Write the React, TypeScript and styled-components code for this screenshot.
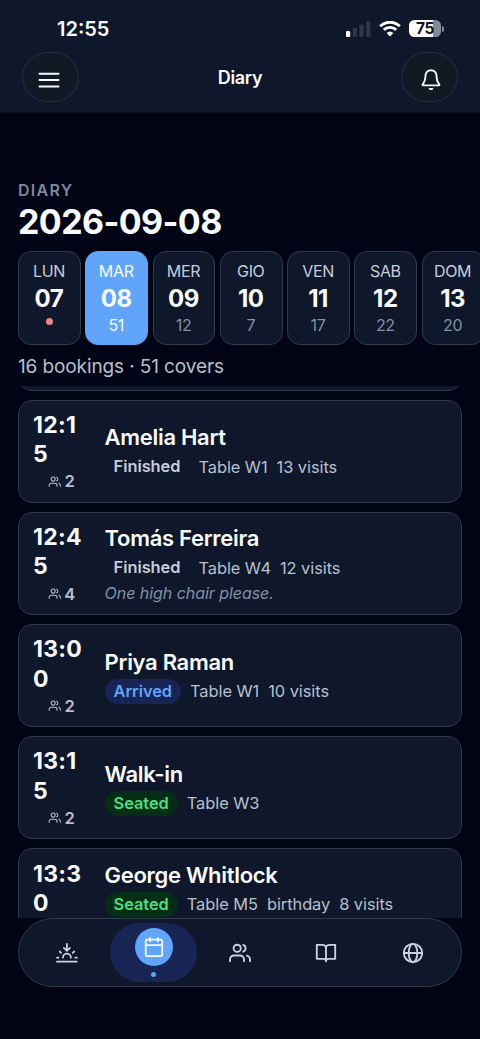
import React from "react";
import styled, { createGlobalStyle } from "styled-components";

const GlobalStyle = createGlobalStyle`
  * { box-sizing: border-box; }
  body {
    margin: 0;
    background: #010414;
    font-family: Inter, "Liberation Sans", sans-serif;
    color: #f8fafc;
    overflow: hidden;
  }
`;

const Screen = styled.div`
  width: 480px;
  height: 1039px;
  display: flex;
  flex-direction: column;
  background: #010414;
  overflow: hidden;
`;

const Header = styled.header`
  height: 113px;
  flex: none;
  background: #0f172a;
  border-bottom: 1px solid #0b1020;
`;

const StatusBar = styled.div`
  height: 52px;
  display: flex;
  justify-content: space-between;
  align-items: center;
  padding: 5px 36px 0 57px;
`;

const Clock = styled.span`
  font-size: 20px;
  font-weight: 600;
  letter-spacing: 0;
`;

const StatusIcons = styled.div`
  display: flex;
  align-items: center;
  gap: 8px;
`;

const TitleBar = styled.div`
  height: 51px;
  display: flex;
  align-items: center;
  justify-content: space-between;
  padding: 0 22px;
`;

const RoundButton = styled.button<{ $inset: string }>`
  width: 57px;
  height: 50px;
  margin-bottom: 1px;
  padding: ${(p) => p.$inset};
  border: 1px solid #242f4b;
  border-radius: 25px;
  background: #111a24;
  color: #f8fafc;
  display: flex;
  align-items: center;
  justify-content: center;
`;

const Title = styled.h1`
  margin: 0;
  font-size: 18px;
  font-weight: 600;
  letter-spacing: -0.3px;
`;

const Intro = styled.section`
  flex: none;
  padding: 67px 0 0 18px;
  height: 273px;
`;

const Eyebrow = styled.div`
  font-size: 16px;
  line-height: 21px;
  font-weight: 600;
  letter-spacing: 1.3px;
  color: #7e899e;
`;

const Heading = styled.h2`
  margin: 0 0 8px;
  font-size: 34px;
  line-height: 42px;
  font-weight: 700;
  letter-spacing: -0.6px;
`;

const Days = styled.div`
  display: flex;
  gap: 4.4px;
  overflow: hidden;
`;

const Day = styled.button<{ $active?: boolean }>`
  flex: none;
  width: 62.9px;
  height: 94.4px;
  padding: 8px 1px 0 0;
  border: 1px solid ${(p) => (p.$active ? "#60a5fa" : "#303a4c")};
  border-radius: 13px;
  background: ${(p) => (p.$active ? "#60a5fa" : "#0f172a")};
  font-family: inherit;
  display: flex;
  flex-direction: column;
  align-items: center;
`;

const DayName = styled.span<{ $active?: boolean }>`
  font-size: 16px;
  line-height: 22px;
  letter-spacing: -0.35px;
  color: ${(p) => (p.$active ? "#f8fafc" : "#c5cddb")};
`;

const DayNumber = styled.span`
  padding-top: 1px;
  font-size: 24px;
  line-height: 31px;
  font-weight: 700;
  letter-spacing: -0.5px;
  color: #f8fafc;
`;

const DayCovers = styled.span<{ $active?: boolean }>`
  font-size: 16px;
  line-height: 22px;
  letter-spacing: -0.3px;
  color: ${(p) => (p.$active ? "#f8fafc" : "#8490a5")};
`;

const ClosedDot = styled.span`
  width: 7px;
  height: 7px;
  margin: 4px 0 0 1px;
  border-radius: 50%;
  background: #e58787;
`;

const Summary = styled.p`
  margin: 8.2px 0 0;
  font-size: 19px;
  line-height: 25px;
  letter-spacing: -0.11px;
  color: #b7c0cf;
`;

const List = styled.main`
  height: 532px;
  flex: none;
  overflow: hidden;
  padding: 0 18px;
  display: flex;
  flex-direction: column;
  gap: 9.2px;
`;

const PassedCard = styled.div`
  height: 4.5px;
  flex: none;
  display: flex;
  align-items: flex-end;
  overflow: hidden;
  &::after {
    content: "";
    flex: 1;
    height: 60px;
    border: 1px solid #303a4c;
    border-radius: 14px;
    background: #0f172a;
  }
`;

const Card = styled.article`
  flex: none;
  height: 103px;
  border: 1px solid #303a4c;
  border-radius: 14px;
  background: #0f172a;
  padding: 0 14px;
  display: flex;
  align-items: center;
  gap: 14.6px;
`;

const TimeColumn = styled.div`
  width: 57px;
  flex: none;
  display: flex;
  flex-direction: column;
  margin-top: 2px;
`;

const Time = styled.div`
  width: 52px;
  font-size: 23px;
  line-height: 29.3px;
  font-weight: 700;
  letter-spacing: 0.3px;
  word-break: break-all;
`;

const Party = styled.div`
  display: flex;
  align-items: center;
  justify-content: center;
  gap: 3px;
  height: 24px;
  font-size: 16.5px;
  font-weight: 600;
  color: #b7c0cf;
`;

const Details = styled.div`
  display: flex;
  flex-direction: column;
  padding-top: 1.4px;
`;

const Guest = styled.div`
  font-size: 22px;
  line-height: 30px;
  font-weight: 600;
  letter-spacing: -0.3px;
  white-space: nowrap;
`;

const Meta = styled.div`
  display: flex;
  align-items: center;
  gap: 9px;
  height: 29px;
  font-size: 16.4px;
  letter-spacing: -0.05px;
  color: #b7c0cf;
  white-space: nowrap;
`;

type Status = "Finished" | "Arrived" | "Seated";

const pillColors: Record<Status, { bg: string; fg: string }> = {
  Finished: { bg: "transparent", fg: "#c5cddb" },
  Arrived: { bg: "#172454", fg: "#60a5fa" },
  Seated: { bg: "#052e16", fg: "#4ade80" },
};

const Pill = styled.span<{ $status: Status }>`
  height: 25px;
  line-height: 25px;
  padding: 0 9px;
  border-radius: 13px;
  font-weight: 600;
  letter-spacing: -0.05px;
  background: ${(p) => pillColors[p.$status].bg};
  color: ${(p) => pillColors[p.$status].fg};
`;

const Note = styled.div`
  height: 23px;
  font-size: 16px;
  line-height: 23px;
  font-style: italic;
  letter-spacing: -0.05px;
  color: #8490a5;
`;

const TabBar = styled.nav`
  flex: none;
  height: 69.4px;
  margin: 0 18px;
  padding: 0 5px;
  border: 1px solid #303a4c;
  border-radius: 35px;
  background: #0f172a;
  display: flex;
  align-items: center;
  color: #c8d1e6;
`;

const Tab = styled.button<{ $active?: boolean }>`
  flex: 1;
  height: 59px;
  padding: ${(p) => (p.$active ? "5px 0 0" : "0")};
  border: 0;
  border-radius: 30px;
  background: ${(p) => (p.$active ? "#172454" : "transparent")};
  color: inherit;
  display: flex;
  flex-direction: column;
  align-items: center;
  justify-content: ${(p) => (p.$active ? "flex-start" : "center")};
`;

const ActiveCircle = styled.span`
  width: 38px;
  height: 38px;
  border-radius: 50%;
  background: #60a5fa;
  color: #f8fafc;
  display: flex;
  align-items: center;
  justify-content: center;
`;

const ActiveDot = styled.span`
  width: 5px;
  height: 5px;
  margin-top: 6px;
  border-radius: 50%;
  background: #60a5fa;
`;

function Icon({ size = 24, box = "0 0 24 24", width = 1.85, children }: { size?: number; box?: string; width?: number; children: React.ReactNode }) {
  return (
    <svg width={size} height={size} viewBox={box} fill="none" stroke="currentColor" strokeWidth={width} strokeLinecap="round" strokeLinejoin="round">
      {children}
    </svg>
  );
}

const UsersPaths = () => (
  <>
    <path d="M2 20.2v-1.7a4 4 0 0 1 4-4h6a4 4 0 0 1 4 4v1.7" />
    <circle cx="9.2" cy="7.3" r="3.6" />
    <path d="M22 20.2v-1.7a4 4 0 0 0-3-3.8M15.2 3.9a3.6 3.6 0 0 1 0 6.8" />
  </>
);

const Signal = () => (
  <svg width="25" height="16" viewBox="0 0 25 16" fill="#2f3748">
    <rect x="0" y="10" width="4.2" height="6" rx="1.2" fill="#fff" />
    <rect x="6.8" y="7" width="4.2" height="9" rx="1.2" />
    <rect x="13.4" y="3.5" width="4.2" height="12.5" rx="1.2" />
    <rect x="20.2" y="0.3" width="4.2" height="15.7" rx="1.2" />
  </svg>
);

const Wifi = () => (
  <svg width="22" height="16" viewBox="0 0.6 22 16" fill="none" stroke="#fff" strokeWidth="2.9">
    <path d="M1.2 5.8a14 14 0 0 1 19.6 0" />
    <path d="M4.8 9.5a8.9 8.9 0 0 1 12.4 0" />
    <path d="M7.6 12.6a5 5 0 0 1 6.8 0L11 16z" fill="#fff" stroke="none" />
  </svg>
);

const Battery = styled.div`
  display: flex;
  align-items: center;
  gap: 1px;
  &::after {
    content: "";
    width: 2px;
    height: 6px;
    border-radius: 0 2px 2px 0;
    background: #858995;
  }
`;

const BatteryBody = styled.div`
  width: 32px;
  height: 17px;
  border-radius: 5.5px;
  background: linear-gradient(90deg, #fff 75%, #858995 75%);
  color: #0f172a;
  font-size: 15.5px;
  line-height: 17px;
  font-weight: 700;
  letter-spacing: -0.4px;
  text-align: center;
`;

const days = [
  { name: "LUN", number: "07" },
  { name: "MAR", number: "08", covers: 51, active: true },
  { name: "MER", number: "09", covers: 12 },
  { name: "GIO", number: "10", covers: 7 },
  { name: "VEN", number: "11", covers: 17 },
  { name: "SAB", number: "12", covers: 22 },
  { name: "DOM", number: "13", covers: 20 },
];

type Booking = { time: string; party?: number; guest: string; status: Status; meta: string[]; note?: string };

const bookings: Booking[] = [
  { time: "12:15", party: 2, guest: "Amelia Hart", status: "Finished", meta: ["Table W1", "13 visits"] },
  { time: "12:45", party: 4, guest: "Tomás Ferreira", status: "Finished", meta: ["Table W4", "12 visits"], note: "One high chair please." },
  { time: "13:00", party: 2, guest: "Priya Raman", status: "Arrived", meta: ["Table W1", "10 visits"] },
  { time: "13:15", party: 2, guest: "Walk-in", status: "Seated", meta: ["Table W3"] },
  { time: "13:30", guest: "George Whitlock", status: "Seated", meta: ["Table M5", "birthday", "8 visits"], note: "" },
];

export default function App() {
  return (
    <Screen>
      <GlobalStyle />
      <Header>
        <StatusBar>
          <Clock>12:55</Clock>
          <StatusIcons>
            <Signal />
            <Wifi />
            <Battery><BatteryBody>75</BatteryBody></Battery>
          </StatusIcons>
        </StatusBar>
        <TitleBar>
          <RoundButton $inset="5px 3px 0 0" aria-label="Menu">
            <Icon width={2}><path d="M2.5 5.7h19M2.5 12.1h19M2.5 18.5h19" /></Icon>
          </RoundButton>
          <Title>Diary</Title>
          <RoundButton $inset="5px 0 0 3px" aria-label="Notifications">
            <Icon>
              <path d="M12 2.2c-3.1 0-5.3 2.3-5.5 5.4-.2 3.9-.5 5.4-1.6 7-.6.9-1.4 1.5-1.4 2.1 0 .4.3.6.8.6h15.4c.5 0 .8-.2.8-.6 0-.6-.8-1.2-1.4-2.1-1.1-1.6-1.4-3.1-1.6-7-.2-3.1-2.4-5.4-5.5-5.4z" />
              <path d="M10.3 20.7c.7 1 2.7 1 3.4 0z" fill="currentColor" strokeWidth={1.4} />
            </Icon>
          </RoundButton>
        </TitleBar>
      </Header>

      <Intro>
        <Eyebrow>DIARY</Eyebrow>
        <Heading>2026-09-08</Heading>
        <Days>
          {days.map((d) => (
            <Day key={d.number} $active={d.active}>
              <DayName $active={d.active}>{d.name}</DayName>
              <DayNumber>{d.number}</DayNumber>
              {d.covers ? <DayCovers $active={d.active}>{d.covers}</DayCovers> : <ClosedDot />}
            </Day>
          ))}
        </Days>
        <Summary>16 bookings · 51 covers</Summary>
      </Intro>

      <List>
        <PassedCard />
        {bookings.map((b) => (
          <Card key={b.time}>
            <TimeColumn>
              <Time>{b.time}</Time>
              <Party>
                {b.party && <Icon size={13.5}><UsersPaths /></Icon>}
                {b.party}
              </Party>
            </TimeColumn>
            <Details>
              <Guest>{b.guest}</Guest>
              <Meta>
                <Pill $status={b.status}>{b.status}</Pill>
                {b.meta.map((m) => <span key={m}>{m}</span>)}
              </Meta>
              {b.note !== undefined && <Note>{b.note}</Note>}
            </Details>
          </Card>
        ))}
      </List>

      <TabBar>
        <Tab aria-label="Today">
          <Icon size={22} box="0 -1 22 22" width={1.8}>
            <path d="M10.9 1v6.5M7.9 4.9l3 3 3-3M6.9 14.7a4 4 0 0 1 8 0M1 14.7h1.4M19.4 14.7h1.4M3.7 8.5l1.3 1.3M18.1 8.5l-1.3 1.3M1 18.7h19.8" />
          </Icon>
        </Tab>
        <Tab $active aria-label="Diary">
          <ActiveCircle>
            <Icon size={22} width={1.9}><rect x="3" y="4" width="18" height="18" rx="1.5" /><path d="M7.7 2v3.8M16.3 2v3.8M3 10h18" /></Icon>
          </ActiveCircle>
          <ActiveDot />
        </Tab>
        <Tab aria-label="Guests"><Icon><UsersPaths /></Icon></Tab>
        <Tab aria-label="Menu book">
          <Icon><path d="M2.8 3.8h5.7a3.5 3 0 0 1 3.5 3v13.4a2.6 2.4 0 0 0-2.6-2.4H2.8zM21.2 3.8h-5.7a3.5 3 0 0 0-3.5 3v13.4a2.6 2.4 0 0 1 2.6-2.4h6.6z" /></Icon>
        </Tab>
        <Tab aria-label="Website">
          <Icon><circle cx="12" cy="12" r="9.2" /><ellipse cx="12" cy="12" rx="4.3" ry="9.2" /><path d="M2.8 12h18.4" /></Icon>
        </Tab>
      </TabBar>
    </Screen>
  );
}
